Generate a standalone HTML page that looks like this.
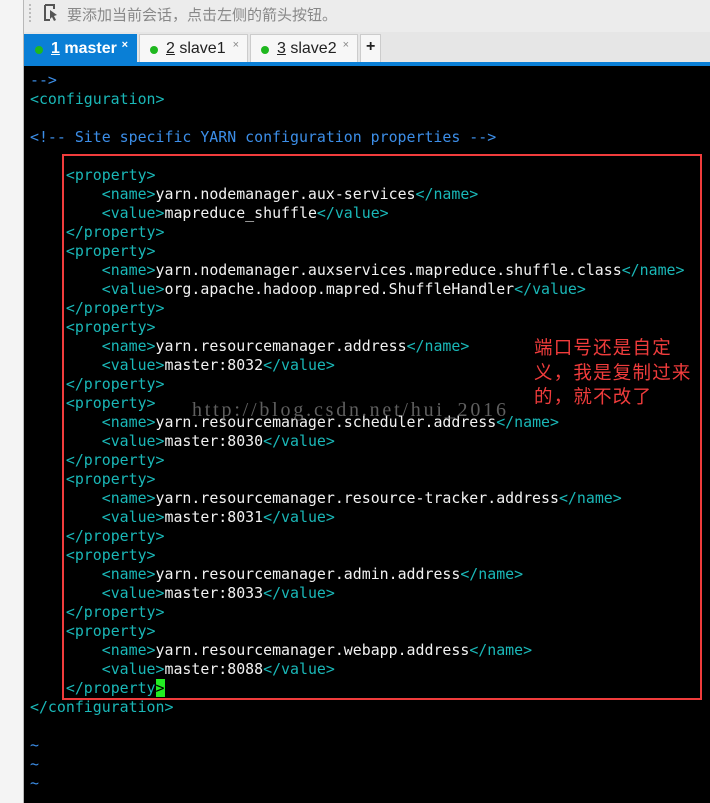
<!DOCTYPE html>
<html><head><meta charset="utf-8"><style>
*{margin:0;padding:0;box-sizing:border-box}
body{width:710px;height:803px;overflow:hidden;background:#000;position:relative;font-family:"Liberation Sans","Noto Sans CJK SC",sans-serif}
#left{position:absolute;left:0;top:0;width:24px;height:803px;background:#f4f4f4;border-right:1px solid #b8b8b8}
#top{position:absolute;left:24px;top:0;width:686px;height:32px;background:#ececec;color:#888;font-size:15px}
#tabs{position:absolute;left:24px;top:32px;width:686px;height:31px;background:#e6e6e6}
.tab{position:absolute;top:2px;height:29px;background:#f7f7f7;border:1px solid #ccc;border-bottom:none;font-size:16px;color:#222;padding:5px 0 0 26px}
.tab .d{position:absolute;left:10px;top:11px;width:8px;height:8px;border-radius:50%;background:#1fb81f}
.tab .x{position:absolute;right:8px;top:4px;font-size:11px;color:#888}
#bar{position:absolute;left:24px;top:62px;width:686px;height:4px;background:#0a7fd6}
#term{position:absolute;left:30px;top:71px;font-family:"DejaVu Sans Mono",monospace;font-size:14.9px;line-height:19px;color:#f2f2f2;white-space:pre}
.t{color:#1ab8b8}.c{color:#3c8ee8}
</style></head><body>
<div id="left"></div>
<div id="top"><div style="position:absolute;left:5px;top:4px;width:2px;height:18px;border-left:2px dotted #bbb"></div>
<svg style="position:absolute;left:20px;top:4px" width="16" height="17" viewBox="0 0 16 17"><path d="M1 1h9v4M1 1v15h5" stroke="#555" stroke-width="2" fill="none"/><path d="M6 6l7 5-3 1 2 4-2 1-2-4-2 2z" fill="#555"/></svg>
<span style="position:absolute;left:43px;top:4px">要添加当前会话，点击左侧的箭头按钮。</span></div>
<div id="tabs">
<div class="tab" style="left:0;width:113px;background:#0a7fd6;color:#fff;border-color:#0a7fd6;font-weight:bold"><span class="d"></span><u>1</u> master<span class="x" style="color:#fff">×</span></div>
<div class="tab" style="left:115px;width:109px"><span class="d"></span><u>2</u> slave1<span class="x">×</span></div>
<div class="tab" style="left:226px;width:108px"><span class="d"></span><u>3</u> slave2<span class="x">×</span></div>
<div class="tab" style="left:336px;width:21px;padding:3px 0 0 5px;font-weight:bold;font-size:16px">+</div>
</div>
<div id="bar"></div>
<div id="term"><span class="c">--&gt;</span>
<span class="t">&lt;configuration&gt;</span>

<span class="c">&lt;!-- Site specific YARN configuration properties --&gt;</span>

    <span class="t">&lt;property&gt;</span>
        <span class="t">&lt;name&gt;</span>yarn.nodemanager.aux-services<span class="t">&lt;/name&gt;</span>
        <span class="t">&lt;value&gt;</span>mapreduce_shuffle<span class="t">&lt;/value&gt;</span>
    <span class="t">&lt;/property&gt;</span>
    <span class="t">&lt;property&gt;</span>
        <span class="t">&lt;name&gt;</span>yarn.nodemanager.auxservices.mapreduce.shuffle.class<span class="t">&lt;/name&gt;</span>
        <span class="t">&lt;value&gt;</span>org.apache.hadoop.mapred.ShuffleHandler<span class="t">&lt;/value&gt;</span>
    <span class="t">&lt;/property&gt;</span>
    <span class="t">&lt;property&gt;</span>
        <span class="t">&lt;name&gt;</span>yarn.resourcemanager.address<span class="t">&lt;/name&gt;</span>
        <span class="t">&lt;value&gt;</span>master:8032<span class="t">&lt;/value&gt;</span>
    <span class="t">&lt;/property&gt;</span>
    <span class="t">&lt;property&gt;</span>
        <span class="t">&lt;name&gt;</span>yarn.resourcemanager.scheduler.address<span class="t">&lt;/name&gt;</span>
        <span class="t">&lt;value&gt;</span>master:8030<span class="t">&lt;/value&gt;</span>
    <span class="t">&lt;/property&gt;</span>
    <span class="t">&lt;property&gt;</span>
        <span class="t">&lt;name&gt;</span>yarn.resourcemanager.resource-tracker.address<span class="t">&lt;/name&gt;</span>
        <span class="t">&lt;value&gt;</span>master:8031<span class="t">&lt;/value&gt;</span>
    <span class="t">&lt;/property&gt;</span>
    <span class="t">&lt;property&gt;</span>
        <span class="t">&lt;name&gt;</span>yarn.resourcemanager.admin.address<span class="t">&lt;/name&gt;</span>
        <span class="t">&lt;value&gt;</span>master:8033<span class="t">&lt;/value&gt;</span>
    <span class="t">&lt;/property&gt;</span>
    <span class="t">&lt;property&gt;</span>
        <span class="t">&lt;name&gt;</span>yarn.resourcemanager.webapp.address<span class="t">&lt;/name&gt;</span>
        <span class="t">&lt;value&gt;</span>master:8088<span class="t">&lt;/value&gt;</span>
    <span class="t">&lt;/property<span style="background:#22ee22;color:#000">&gt;</span></span>
<span class="t">&lt;/configuration&gt;</span>

<span class="c">~</span>
<span class="c">~</span>
<span class="c">~</span></div>
<div style="position:absolute;left:62px;top:154px;width:640px;height:546px;border:2px solid #f03c3c"></div>
<div style="position:absolute;left:192px;top:399px;font-family:'Liberation Serif',serif;font-size:20px;letter-spacing:2.8px;color:#777;opacity:.8">http://blog.csdn.net/hui_2016</div>
<div style="position:absolute;left:534px;top:336px;color:#f03c3c;font-size:18.5px;letter-spacing:1.2px;line-height:24.5px;font-family:'Liberation Sans','Noto Sans CJK SC',sans-serif">端口号还是自定<br>义，我是复制过来<br>的，就不改了</div>
</body></html>
